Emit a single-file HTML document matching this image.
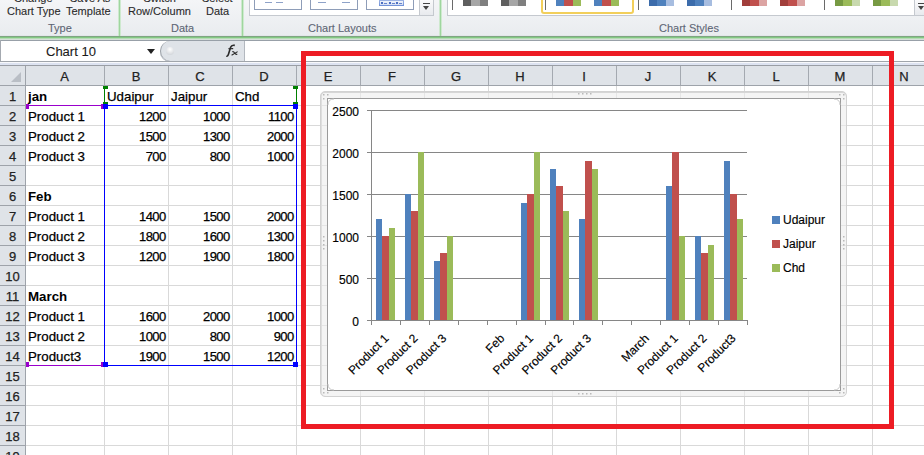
<!DOCTYPE html><html><head><meta charset="utf-8"><style>
*{margin:0;padding:0;box-sizing:border-box}
body{width:924px;height:455px;overflow:hidden;position:relative;background:#fff;font-family:"Liberation Sans",sans-serif;}
.a{position:absolute}
.t{position:absolute;white-space:nowrap;line-height:1;-webkit-text-stroke:0.25px currentColor}
</style></head><body>

<div class="a" style="left:0;top:0;width:924px;height:36px;background:linear-gradient(#f4f5f7,#e9ecef)"></div>
<div class="a" style="left:0;top:35px;width:924px;height:1px;background:#e3e6ea"></div>
<div class="a" style="left:0;top:36px;width:924px;height:1px;background:#7fa582"></div>
<div class="a" style="left:0;top:37px;width:924px;height:1px;background:#82c882"></div>
<div class="a" style="left:0;top:38px;width:924px;height:1px;background:#b5dbb5"></div>
<div class="a" style="left:0;top:39px;width:924px;height:1px;background:#d5dfd8"></div>
<div class="a" style="left:0;top:40px;width:924px;height:1px;background:#98a0a8"></div>
<div class="a" style="left:118px;top:0;width:3px;height:36px;background:linear-gradient(90deg,rgba(255,255,255,.8),#9fd69f 33%,#9fd69f 66%,rgba(255,255,255,.8))"></div>
<div class="a" style="left:241px;top:0;width:3px;height:36px;background:linear-gradient(90deg,rgba(255,255,255,.8),#9fd69f 33%,#9fd69f 66%,rgba(255,255,255,.8))"></div>
<div class="a" style="left:439px;top:0;width:3px;height:36px;background:linear-gradient(90deg,rgba(255,255,255,.8),#9fd69f 33%,#9fd69f 66%,rgba(255,255,255,.8))"></div>
<div class="t" style="left:14px;top:-7.5px;font-size:11px;color:#2b2b2b;-webkit-text-stroke:0.1px #2b2b2b;">Change</div>
<div class="t" style="left:70px;top:-7.5px;font-size:11px;color:#2b2b2b;-webkit-text-stroke:0.1px #2b2b2b;">Save As</div>
<div class="t" style="left:7px;top:5.5px;font-size:11px;color:#2b2b2b;-webkit-text-stroke:0.1px #2b2b2b;">Chart Type</div>
<div class="t" style="left:66px;top:5.5px;font-size:11px;color:#2b2b2b;-webkit-text-stroke:0.1px #2b2b2b;">Template</div>
<div class="t" style="left:143.5px;top:-7.5px;font-size:11px;color:#2b2b2b;-webkit-text-stroke:0.1px #2b2b2b;">Switch</div>
<div class="t" style="left:202px;top:-7.5px;font-size:11px;color:#2b2b2b;-webkit-text-stroke:0.1px #2b2b2b;">Select</div>
<div class="t" style="left:128px;top:5.5px;font-size:11px;color:#2b2b2b;-webkit-text-stroke:0.1px #2b2b2b;">Row/Column</div>
<div class="t" style="left:206px;top:5.5px;font-size:11px;color:#2b2b2b;-webkit-text-stroke:0.1px #2b2b2b;">Data</div>
<div class="t" style="left:48px;top:22.5px;font-size:11px;color:#5e6675;-webkit-text-stroke:0.1px #5e6675;">Type</div>
<div class="t" style="left:171px;top:22.5px;font-size:11px;color:#5e6675;-webkit-text-stroke:0.1px #5e6675;">Data</div>
<div class="t" style="left:308px;top:22.5px;font-size:11px;color:#5e6675;-webkit-text-stroke:0.1px #5e6675;">Chart Layouts</div>
<div class="t" style="left:659px;top:22.5px;font-size:11px;color:#5e6675;-webkit-text-stroke:0.1px #5e6675;">Chart Styles</div>
<div class="a" style="left:249px;top:-2px;width:185px;height:18px;border:1px solid #c5c9cf;background:#fff"></div>
<div class="a" style="left:419px;top:-2px;width:15px;height:18px;border:1px solid #c5c9cf;background:linear-gradient(#fbfbfc,#e8eaee)"></div>
<div class="a" style="left:423px;top:3px;width:7px;height:1px;background:#444"></div>
<div class="a" style="left:423px;top:6px;width:0;height:0;border-left:3.5px solid transparent;border-right:3.5px solid transparent;border-top:4px solid #444"></div>
<div class="a" style="left:254px;top:-3px;width:48px;height:13px;border:1px solid #8e9db8;background:#fff"></div>
<div class="a" style="left:310px;top:-3px;width:48px;height:13px;border:1px solid #8e9db8;background:#fff"></div>
<div class="a" style="left:366px;top:-3px;width:48px;height:13px;border:1px solid #8e9db8;background:#fff"></div>
<div class="a" style="left:265px;top:2px;width:7px;height:1px;background:#8ea2c8"></div>
<div class="a" style="left:276px;top:2px;width:7px;height:1px;background:#8ea2c8"></div>
<div class="a" style="left:318px;top:2px;width:8px;height:1px;background:#8ea2c8"></div>
<div class="a" style="left:342px;top:2px;width:8px;height:1px;background:#8ea2c8"></div>
<div class="a" style="left:379px;top:-1px;width:25px;height:7px;background:linear-gradient(#a8bce6,#6d8fd8)"></div>
<div class="a" style="left:380px;top:1px;width:23px;height:4px;background:linear-gradient(#f0f4fb,#d4def3)"></div>
<div class="a" style="left:381px;top:2px;width:2px;height:2px;background:#4d6fc2"></div>
<div class="a" style="left:384px;top:3px;width:3px;height:1px;background:#6683cc"></div>
<div class="a" style="left:389px;top:2px;width:2px;height:2px;background:#4d6fc2"></div>
<div class="a" style="left:392px;top:3px;width:3px;height:1px;background:#6683cc"></div>
<div class="a" style="left:396px;top:2px;width:2px;height:2px;background:#4d6fc2"></div>
<div class="a" style="left:399px;top:3px;width:3px;height:1px;background:#6683cc"></div>
<div class="a" style="left:447px;top:-2px;width:478px;height:18px;border:1px solid #c5c9cf;background:#fff"></div>
<div class="a" style="left:914px;top:-2px;width:15px;height:18px;border:1px solid #c5c9cf;background:linear-gradient(#fbfbfc,#e8eaee)"></div>
<div class="a" style="left:918px;top:3px;width:7px;height:1px;background:#444"></div>
<div class="a" style="left:918px;top:6px;width:0;height:0;border-left:3.5px solid transparent;border-right:3.5px solid transparent;border-top:4px solid #444"></div>
<div class="a" style="left:541px;top:-3px;width:93px;height:17px;border:2px solid #f2cf5b;border-radius:0 0 3px 3px;background:#fff"></div>
<div class="a" style="left:452px;top:0;width:1px;height:10px;background:#6a6a6a"></div>
<div class="a" style="left:545px;top:0;width:1px;height:10px;background:#6a6a6a"></div>
<div class="a" style="left:638px;top:0;width:1px;height:10px;background:#6a6a6a"></div>
<div class="a" style="left:731px;top:0;width:1px;height:10px;background:#6a6a6a"></div>
<div class="a" style="left:824px;top:0;width:1px;height:10px;background:#6a6a6a"></div>
<div class="a" style="left:463px;top:0;width:8px;height:6px;background:#5f5f5f"></div>
<div class="a" style="left:471px;top:0;width:9px;height:6px;background:#a6a6a6"></div>
<div class="a" style="left:480px;top:0;width:8px;height:6px;background:#7f7f7f"></div>
<div class="a" style="left:501px;top:0;width:8px;height:6px;background:#5f5f5f"></div>
<div class="a" style="left:509px;top:0;width:9px;height:6px;background:#a6a6a6"></div>
<div class="a" style="left:518px;top:0;width:8px;height:6px;background:#7f7f7f"></div>
<div class="a" style="left:556px;top:0;width:8px;height:6px;background:#4f81bd"></div>
<div class="a" style="left:564px;top:0;width:9px;height:6px;background:#c0504d"></div>
<div class="a" style="left:573px;top:0;width:8px;height:6px;background:#9bbb59"></div>
<div class="a" style="left:594px;top:0;width:8px;height:6px;background:#4f81bd"></div>
<div class="a" style="left:602px;top:0;width:9px;height:6px;background:#c0504d"></div>
<div class="a" style="left:611px;top:0;width:8px;height:6px;background:#9bbb59"></div>
<div class="a" style="left:649px;top:0;width:8px;height:6px;background:#3c6cab"></div>
<div class="a" style="left:657px;top:0;width:9px;height:6px;background:#4f81bd"></div>
<div class="a" style="left:666px;top:0;width:8px;height:6px;background:#a7bde0"></div>
<div class="a" style="left:687px;top:0;width:8px;height:6px;background:#3c6cab"></div>
<div class="a" style="left:695px;top:0;width:9px;height:6px;background:#4f81bd"></div>
<div class="a" style="left:704px;top:0;width:8px;height:6px;background:#a7bde0"></div>
<div class="a" style="left:742px;top:0;width:8px;height:6px;background:#a13e3b"></div>
<div class="a" style="left:750px;top:0;width:9px;height:6px;background:#c0504d"></div>
<div class="a" style="left:759px;top:0;width:8px;height:6px;background:#dca4a3"></div>
<div class="a" style="left:780px;top:0;width:8px;height:6px;background:#a13e3b"></div>
<div class="a" style="left:788px;top:0;width:9px;height:6px;background:#c0504d"></div>
<div class="a" style="left:797px;top:0;width:8px;height:6px;background:#dca4a3"></div>
<div class="a" style="left:835px;top:0;width:8px;height:6px;background:#779a43"></div>
<div class="a" style="left:843px;top:0;width:9px;height:6px;background:#9bbb59"></div>
<div class="a" style="left:852px;top:0;width:8px;height:6px;background:#c8d9ae"></div>
<div class="a" style="left:873px;top:0;width:8px;height:6px;background:#779a43"></div>
<div class="a" style="left:881px;top:0;width:9px;height:6px;background:#9bbb59"></div>
<div class="a" style="left:890px;top:0;width:8px;height:6px;background:#c8d9ae"></div>
<div class="a" style="left:0;top:41px;width:924px;height:20px;background:#fff"></div>
<div class="a" style="left:0;top:40px;width:1px;height:21px;background:#a4a9b0"></div>
<div class="t" style="left:46px;top:45px;font-size:13px;color:#1a1a1a;-webkit-text-stroke:0.1px #1a1a1a;">Chart 10</div>
<div class="a" style="left:147px;top:49px;width:0;height:0;border-left:4px solid transparent;border-right:4px solid transparent;border-top:5px solid #222"></div>
<div class="a" style="left:160px;top:41px;width:85px;height:21px;background:#dfe3e8;border:1px solid #b3b8bf;border-left:none;border-top:none;border-radius:10px 0 0 10px"></div>
<div class="a" style="left:160px;top:41px;width:20px;height:20px;border-left:1px solid #9ba0a7;border-radius:10px 0 0 10px"></div>
<div class="a" style="left:166px;top:47px;width:8px;height:8px;border-radius:50%;background:radial-gradient(circle at 50% 30%,#fff,#c8ccd2)"></div>
<svg class="a" style="left:0;top:0" width="924" height="62"><path d="M226.3 56.2 Q227.8 56.6 228.7 53.5 L230.6 47.3 Q231.6 44.6 234.8 45.4" fill="none" stroke="#2a2a2a" stroke-width="1.6"/><path d="M228.3 48.8 L233.2 48.6" stroke="#2a2a2a" stroke-width="1.1"/><path d="M232.3 51.8 Q233.6 51.2 234.6 53 Q235.6 54.8 237.3 54.3 M237.6 51.6 L231.6 55.2" fill="none" stroke="#2a2a2a" stroke-width="1.1"/></svg>
<div class="a" style="left:0;top:61px;width:924px;height:1px;background:#a0a5ab"></div>
<div class="a" style="left:0;top:62px;width:924px;height:1px;background:#f7f8fb"></div>
<div class="a" style="left:0;top:63px;width:924px;height:2px;background:#dde3f1"></div>
<div class="a" style="left:0;top:65px;width:924px;height:1px;background:#9a9ea5"></div>
<div class="a" style="left:0;top:66px;width:924px;height:19px;background:#dfe3e8"></div>
<div class="a" style="left:0;top:85px;width:924px;height:1px;background:#9ea3aa"></div>
<div class="a" style="left:0;top:86px;width:25px;height:369px;background:#dfe3e8"></div>
<div class="a" style="left:25px;top:66px;width:1px;height:389px;background:#9ea3aa"></div>
<div class="a" style="left:11px;top:72px;width:0;height:0;border-left:10px solid transparent;border-bottom:10px solid #b9bec5"></div>
<div class="a" style="left:104px;top:66px;width:1px;height:19px;background:#a4a9b0"></div>
<div class="t" style="left:25px;width:79px;text-align:center;top:70px;font-size:13px;color:#222">A</div>
<div class="a" style="left:168px;top:66px;width:1px;height:19px;background:#a4a9b0"></div>
<div class="t" style="left:104px;width:64px;text-align:center;top:70px;font-size:13px;color:#222">B</div>
<div class="a" style="left:232px;top:66px;width:1px;height:19px;background:#a4a9b0"></div>
<div class="t" style="left:168px;width:64px;text-align:center;top:70px;font-size:13px;color:#222">C</div>
<div class="a" style="left:296px;top:66px;width:1px;height:19px;background:#a4a9b0"></div>
<div class="t" style="left:232px;width:64px;text-align:center;top:70px;font-size:13px;color:#222">D</div>
<div class="a" style="left:360px;top:66px;width:1px;height:19px;background:#a4a9b0"></div>
<div class="t" style="left:296px;width:64px;text-align:center;top:70px;font-size:13px;color:#222">E</div>
<div class="a" style="left:424px;top:66px;width:1px;height:19px;background:#a4a9b0"></div>
<div class="t" style="left:360px;width:64px;text-align:center;top:70px;font-size:13px;color:#222">F</div>
<div class="a" style="left:488px;top:66px;width:1px;height:19px;background:#a4a9b0"></div>
<div class="t" style="left:424px;width:64px;text-align:center;top:70px;font-size:13px;color:#222">G</div>
<div class="a" style="left:552px;top:66px;width:1px;height:19px;background:#a4a9b0"></div>
<div class="t" style="left:488px;width:64px;text-align:center;top:70px;font-size:13px;color:#222">H</div>
<div class="a" style="left:616px;top:66px;width:1px;height:19px;background:#a4a9b0"></div>
<div class="t" style="left:552px;width:64px;text-align:center;top:70px;font-size:13px;color:#222">I</div>
<div class="a" style="left:680px;top:66px;width:1px;height:19px;background:#a4a9b0"></div>
<div class="t" style="left:616px;width:64px;text-align:center;top:70px;font-size:13px;color:#222">J</div>
<div class="a" style="left:744px;top:66px;width:1px;height:19px;background:#a4a9b0"></div>
<div class="t" style="left:680px;width:64px;text-align:center;top:70px;font-size:13px;color:#222">K</div>
<div class="a" style="left:808px;top:66px;width:1px;height:19px;background:#a4a9b0"></div>
<div class="t" style="left:744px;width:64px;text-align:center;top:70px;font-size:13px;color:#222">L</div>
<div class="a" style="left:872px;top:66px;width:1px;height:19px;background:#a4a9b0"></div>
<div class="t" style="left:808px;width:64px;text-align:center;top:70px;font-size:13px;color:#222">M</div>
<div class="a" style="left:936px;top:66px;width:1px;height:19px;background:#a4a9b0"></div>
<div class="t" style="left:872px;width:64px;text-align:center;top:70px;font-size:13px;color:#222">N</div>
<div class="a" style="left:104px;top:86px;width:1px;height:369px;background:#d9d9d9"></div>
<div class="a" style="left:168px;top:86px;width:1px;height:369px;background:#d9d9d9"></div>
<div class="a" style="left:232px;top:86px;width:1px;height:369px;background:#d9d9d9"></div>
<div class="a" style="left:296px;top:86px;width:1px;height:369px;background:#d9d9d9"></div>
<div class="a" style="left:360px;top:86px;width:1px;height:369px;background:#d9d9d9"></div>
<div class="a" style="left:424px;top:86px;width:1px;height:369px;background:#d9d9d9"></div>
<div class="a" style="left:488px;top:86px;width:1px;height:369px;background:#d9d9d9"></div>
<div class="a" style="left:552px;top:86px;width:1px;height:369px;background:#d9d9d9"></div>
<div class="a" style="left:616px;top:86px;width:1px;height:369px;background:#d9d9d9"></div>
<div class="a" style="left:680px;top:86px;width:1px;height:369px;background:#d9d9d9"></div>
<div class="a" style="left:744px;top:86px;width:1px;height:369px;background:#d9d9d9"></div>
<div class="a" style="left:808px;top:86px;width:1px;height:369px;background:#d9d9d9"></div>
<div class="a" style="left:872px;top:86px;width:1px;height:369px;background:#d9d9d9"></div>
<div class="a" style="left:26px;top:105px;width:898px;height:1px;background:#d9d9d9"></div>
<div class="a" style="left:0;top:105px;width:25px;height:1px;background:#9ea3aa"></div>
<div class="t" style="left:0;width:25px;text-align:center;top:90px;font-size:13px;color:#222">1</div>
<div class="a" style="left:26px;top:125px;width:898px;height:1px;background:#d9d9d9"></div>
<div class="a" style="left:0;top:125px;width:25px;height:1px;background:#9ea3aa"></div>
<div class="t" style="left:0;width:25px;text-align:center;top:110px;font-size:13px;color:#222">2</div>
<div class="a" style="left:26px;top:145px;width:898px;height:1px;background:#d9d9d9"></div>
<div class="a" style="left:0;top:145px;width:25px;height:1px;background:#9ea3aa"></div>
<div class="t" style="left:0;width:25px;text-align:center;top:130px;font-size:13px;color:#222">3</div>
<div class="a" style="left:26px;top:165px;width:898px;height:1px;background:#d9d9d9"></div>
<div class="a" style="left:0;top:165px;width:25px;height:1px;background:#9ea3aa"></div>
<div class="t" style="left:0;width:25px;text-align:center;top:150px;font-size:13px;color:#222">4</div>
<div class="a" style="left:26px;top:185px;width:898px;height:1px;background:#d9d9d9"></div>
<div class="a" style="left:0;top:185px;width:25px;height:1px;background:#9ea3aa"></div>
<div class="t" style="left:0;width:25px;text-align:center;top:170px;font-size:13px;color:#222">5</div>
<div class="a" style="left:26px;top:205px;width:898px;height:1px;background:#d9d9d9"></div>
<div class="a" style="left:0;top:205px;width:25px;height:1px;background:#9ea3aa"></div>
<div class="t" style="left:0;width:25px;text-align:center;top:190px;font-size:13px;color:#222">6</div>
<div class="a" style="left:26px;top:225px;width:898px;height:1px;background:#d9d9d9"></div>
<div class="a" style="left:0;top:225px;width:25px;height:1px;background:#9ea3aa"></div>
<div class="t" style="left:0;width:25px;text-align:center;top:210px;font-size:13px;color:#222">7</div>
<div class="a" style="left:26px;top:245px;width:898px;height:1px;background:#d9d9d9"></div>
<div class="a" style="left:0;top:245px;width:25px;height:1px;background:#9ea3aa"></div>
<div class="t" style="left:0;width:25px;text-align:center;top:230px;font-size:13px;color:#222">8</div>
<div class="a" style="left:26px;top:265px;width:898px;height:1px;background:#d9d9d9"></div>
<div class="a" style="left:0;top:265px;width:25px;height:1px;background:#9ea3aa"></div>
<div class="t" style="left:0;width:25px;text-align:center;top:250px;font-size:13px;color:#222">9</div>
<div class="a" style="left:26px;top:285px;width:898px;height:1px;background:#d9d9d9"></div>
<div class="a" style="left:0;top:285px;width:25px;height:1px;background:#9ea3aa"></div>
<div class="t" style="left:0;width:25px;text-align:center;top:270px;font-size:13px;color:#222">10</div>
<div class="a" style="left:26px;top:305px;width:898px;height:1px;background:#d9d9d9"></div>
<div class="a" style="left:0;top:305px;width:25px;height:1px;background:#9ea3aa"></div>
<div class="t" style="left:0;width:25px;text-align:center;top:290px;font-size:13px;color:#222">11</div>
<div class="a" style="left:26px;top:325px;width:898px;height:1px;background:#d9d9d9"></div>
<div class="a" style="left:0;top:325px;width:25px;height:1px;background:#9ea3aa"></div>
<div class="t" style="left:0;width:25px;text-align:center;top:310px;font-size:13px;color:#222">12</div>
<div class="a" style="left:26px;top:345px;width:898px;height:1px;background:#d9d9d9"></div>
<div class="a" style="left:0;top:345px;width:25px;height:1px;background:#9ea3aa"></div>
<div class="t" style="left:0;width:25px;text-align:center;top:330px;font-size:13px;color:#222">13</div>
<div class="a" style="left:26px;top:365px;width:898px;height:1px;background:#d9d9d9"></div>
<div class="a" style="left:0;top:365px;width:25px;height:1px;background:#9ea3aa"></div>
<div class="t" style="left:0;width:25px;text-align:center;top:350px;font-size:13px;color:#222">14</div>
<div class="a" style="left:26px;top:385px;width:898px;height:1px;background:#d9d9d9"></div>
<div class="a" style="left:0;top:385px;width:25px;height:1px;background:#9ea3aa"></div>
<div class="t" style="left:0;width:25px;text-align:center;top:370px;font-size:13px;color:#222">15</div>
<div class="a" style="left:26px;top:405px;width:898px;height:1px;background:#d9d9d9"></div>
<div class="a" style="left:0;top:405px;width:25px;height:1px;background:#9ea3aa"></div>
<div class="t" style="left:0;width:25px;text-align:center;top:390px;font-size:13px;color:#222">16</div>
<div class="a" style="left:26px;top:425px;width:898px;height:1px;background:#d9d9d9"></div>
<div class="a" style="left:0;top:425px;width:25px;height:1px;background:#9ea3aa"></div>
<div class="t" style="left:0;width:25px;text-align:center;top:410px;font-size:13px;color:#222">17</div>
<div class="a" style="left:26px;top:445px;width:898px;height:1px;background:#d9d9d9"></div>
<div class="a" style="left:0;top:445px;width:25px;height:1px;background:#9ea3aa"></div>
<div class="t" style="left:0;width:25px;text-align:center;top:430px;font-size:13px;color:#222">18</div>
<div class="a" style="left:26px;top:465px;width:898px;height:1px;background:#d9d9d9"></div>
<div class="a" style="left:0;top:465px;width:25px;height:1px;background:#9ea3aa"></div>
<div class="t" style="left:0;width:25px;text-align:center;top:450px;font-size:13px;color:#222">19</div>
<div class="t" style="left:28px;top:90px;font-size:13.3px;color:#000;font-weight:bold;-webkit-text-stroke:0;">jan</div>
<div class="t" style="left:107px;top:90px;font-size:13.3px;color:#000">Udaipur</div>
<div class="t" style="left:171px;top:90px;font-size:13.3px;color:#000">Jaipur</div>
<div class="t" style="left:235px;top:90px;font-size:13.3px;color:#000">Chd</div>
<div class="t" style="left:28px;top:110px;font-size:13.3px;color:#000;">Product 1</div>
<div class="t" style="left:108px;width:57.6px;text-align:right;top:110px;font-size:13px;letter-spacing:-0.6px;color:#000">1200</div>
<div class="t" style="left:172px;width:57.6px;text-align:right;top:110px;font-size:13px;letter-spacing:-0.6px;color:#000">1000</div>
<div class="t" style="left:236px;width:57.6px;text-align:right;top:110px;font-size:13px;letter-spacing:-0.6px;color:#000">1100</div>
<div class="t" style="left:28px;top:130px;font-size:13.3px;color:#000;">Product 2</div>
<div class="t" style="left:108px;width:57.6px;text-align:right;top:130px;font-size:13px;letter-spacing:-0.6px;color:#000">1500</div>
<div class="t" style="left:172px;width:57.6px;text-align:right;top:130px;font-size:13px;letter-spacing:-0.6px;color:#000">1300</div>
<div class="t" style="left:236px;width:57.6px;text-align:right;top:130px;font-size:13px;letter-spacing:-0.6px;color:#000">2000</div>
<div class="t" style="left:28px;top:150px;font-size:13.3px;color:#000;">Product 3</div>
<div class="t" style="left:108px;width:57.6px;text-align:right;top:150px;font-size:13px;letter-spacing:-0.6px;color:#000">700</div>
<div class="t" style="left:172px;width:57.6px;text-align:right;top:150px;font-size:13px;letter-spacing:-0.6px;color:#000">800</div>
<div class="t" style="left:236px;width:57.6px;text-align:right;top:150px;font-size:13px;letter-spacing:-0.6px;color:#000">1000</div>
<div class="t" style="left:28px;top:190px;font-size:13.3px;color:#000;font-weight:bold;-webkit-text-stroke:0;">Feb</div>
<div class="t" style="left:28px;top:210px;font-size:13.3px;color:#000;">Product 1</div>
<div class="t" style="left:108px;width:57.6px;text-align:right;top:210px;font-size:13px;letter-spacing:-0.6px;color:#000">1400</div>
<div class="t" style="left:172px;width:57.6px;text-align:right;top:210px;font-size:13px;letter-spacing:-0.6px;color:#000">1500</div>
<div class="t" style="left:236px;width:57.6px;text-align:right;top:210px;font-size:13px;letter-spacing:-0.6px;color:#000">2000</div>
<div class="t" style="left:28px;top:230px;font-size:13.3px;color:#000;">Product 2</div>
<div class="t" style="left:108px;width:57.6px;text-align:right;top:230px;font-size:13px;letter-spacing:-0.6px;color:#000">1800</div>
<div class="t" style="left:172px;width:57.6px;text-align:right;top:230px;font-size:13px;letter-spacing:-0.6px;color:#000">1600</div>
<div class="t" style="left:236px;width:57.6px;text-align:right;top:230px;font-size:13px;letter-spacing:-0.6px;color:#000">1300</div>
<div class="t" style="left:28px;top:250px;font-size:13.3px;color:#000;">Product 3</div>
<div class="t" style="left:108px;width:57.6px;text-align:right;top:250px;font-size:13px;letter-spacing:-0.6px;color:#000">1200</div>
<div class="t" style="left:172px;width:57.6px;text-align:right;top:250px;font-size:13px;letter-spacing:-0.6px;color:#000">1900</div>
<div class="t" style="left:236px;width:57.6px;text-align:right;top:250px;font-size:13px;letter-spacing:-0.6px;color:#000">1800</div>
<div class="t" style="left:28px;top:290px;font-size:13.3px;color:#000;font-weight:bold;-webkit-text-stroke:0;">March</div>
<div class="t" style="left:28px;top:310px;font-size:13.3px;color:#000;">Product 1</div>
<div class="t" style="left:108px;width:57.6px;text-align:right;top:310px;font-size:13px;letter-spacing:-0.6px;color:#000">1600</div>
<div class="t" style="left:172px;width:57.6px;text-align:right;top:310px;font-size:13px;letter-spacing:-0.6px;color:#000">2000</div>
<div class="t" style="left:236px;width:57.6px;text-align:right;top:310px;font-size:13px;letter-spacing:-0.6px;color:#000">1000</div>
<div class="t" style="left:28px;top:330px;font-size:13.3px;color:#000;">Product 2</div>
<div class="t" style="left:108px;width:57.6px;text-align:right;top:330px;font-size:13px;letter-spacing:-0.6px;color:#000">1000</div>
<div class="t" style="left:172px;width:57.6px;text-align:right;top:330px;font-size:13px;letter-spacing:-0.6px;color:#000">800</div>
<div class="t" style="left:236px;width:57.6px;text-align:right;top:330px;font-size:13px;letter-spacing:-0.6px;color:#000">900</div>
<div class="t" style="left:28px;top:350px;font-size:13.3px;color:#000;">Product3</div>
<div class="t" style="left:108px;width:57.6px;text-align:right;top:350px;font-size:13px;letter-spacing:-0.6px;color:#000">1900</div>
<div class="t" style="left:172px;width:57.6px;text-align:right;top:350px;font-size:13px;letter-spacing:-0.6px;color:#000">1500</div>
<div class="t" style="left:236px;width:57.6px;text-align:right;top:350px;font-size:13px;letter-spacing:-0.6px;color:#000">1200</div>
<div class="a" style="left:26px;top:105px;width:78px;height:1px;background:#9900cc"></div>
<div class="a" style="left:26px;top:365px;width:78px;height:1px;background:#9900cc"></div>
<div class="a" style="left:104px;top:86px;width:1px;height:19px;background:#008000"></div>
<div class="a" style="left:296px;top:86px;width:1px;height:19px;background:#008000"></div>
<div class="a" style="left:104px;top:105px;width:193px;height:1px;background:#0000ff"></div>
<div class="a" style="left:104px;top:365px;width:193px;height:1px;background:#0000ff"></div>
<div class="a" style="left:104px;top:105px;width:1px;height:261px;background:#0000ff"></div>
<div class="a" style="left:296px;top:105px;width:1px;height:261px;background:#0000ff"></div>
<div class="a" style="left:103px;top:86px;width:5px;height:3px;background:#008000"></div>
<div class="a" style="left:103px;top:102px;width:5px;height:3px;background:#008000"></div>
<div class="a" style="left:293px;top:86px;width:5px;height:3px;background:#008000"></div>
<div class="a" style="left:293px;top:102px;width:5px;height:3px;background:#008000"></div>
<div class="a" style="left:103px;top:104px;width:5px;height:5px;background:#0000ff"></div>
<div class="a" style="left:293px;top:104px;width:5px;height:5px;background:#0000ff"></div>
<div class="a" style="left:103px;top:362px;width:5px;height:5px;background:#0000ff"></div>
<div class="a" style="left:293px;top:362px;width:5px;height:5px;background:#0000ff"></div>
<div class="a" style="left:101px;top:104px;width:2px;height:5px;background:#9900cc"></div>
<div class="a" style="left:26px;top:104px;width:3px;height:5px;background:#9900cc"></div>
<div class="a" style="left:101px;top:362px;width:2px;height:5px;background:#9900cc"></div>
<div class="a" style="left:26px;top:362px;width:3px;height:5px;background:#9900cc"></div>
<div class="a" style="left:320px;top:91px;width:527px;height:306px;border:1px solid #d2d2d2;border-radius:5px;background:rgba(236,236,236,.6);box-shadow:inset 0 1px 0 #d6d6d6,inset 1px 0 0 #dedede"></div>
<div class="a" style="left:327px;top:98px;width:514px;height:293px;border:1px solid #9a9a9a;background:#fff"></div>
<svg class="a" style="left:0;top:0" width="924" height="455">
<path d="M328 105 Q328 99 334 99" fill="none" stroke="#c8c8c8" stroke-width="1"/>
<path d="M840 105 Q840 99 834 99" fill="none" stroke="#c8c8c8" stroke-width="1"/>
<path d="M328 384 Q328 390 334 390" fill="none" stroke="#c8c8c8" stroke-width="1"/>
<path d="M840 384 Q840 390 834 390" fill="none" stroke="#c8c8c8" stroke-width="1"/>
<rect x="323" y="94" width="1.5" height="1.5" fill="#a0a0a0" opacity="0.7"/>
<rect x="327" y="94" width="1.5" height="1.5" fill="#a0a0a0" opacity="0.7"/>
<rect x="323" y="98" width="1.5" height="1.5" fill="#a0a0a0" opacity="0.7"/>
<rect x="843" y="94" width="1.5" height="1.5" fill="#a0a0a0" opacity="0.7"/>
<rect x="839" y="94" width="1.5" height="1.5" fill="#a0a0a0" opacity="0.7"/>
<rect x="843" y="98" width="1.5" height="1.5" fill="#a0a0a0" opacity="0.7"/>
<rect x="323" y="392" width="1.5" height="1.5" fill="#a0a0a0" opacity="0.7"/>
<rect x="327" y="392" width="1.5" height="1.5" fill="#a0a0a0" opacity="0.7"/>
<rect x="323" y="388" width="1.5" height="1.5" fill="#a0a0a0" opacity="0.7"/>
<rect x="843" y="392" width="1.5" height="1.5" fill="#a0a0a0" opacity="0.7"/>
<rect x="839" y="392" width="1.5" height="1.5" fill="#a0a0a0" opacity="0.7"/>
<rect x="843" y="388" width="1.5" height="1.5" fill="#a0a0a0" opacity="0.7"/>
<rect x="578" y="93" width="1.5" height="1.5" fill="#a0a0a0" opacity="0.7"/>
<rect x="578" y="393" width="1.5" height="1.5" fill="#a0a0a0" opacity="0.7"/>
<rect x="323" y="236" width="1.5" height="1.5" fill="#a0a0a0" opacity="0.7"/>
<rect x="843" y="236" width="1.5" height="1.5" fill="#a0a0a0" opacity="0.7"/>
<rect x="582" y="93" width="1.5" height="1.5" fill="#a0a0a0" opacity="0.7"/>
<rect x="582" y="393" width="1.5" height="1.5" fill="#a0a0a0" opacity="0.7"/>
<rect x="323" y="240" width="1.5" height="1.5" fill="#a0a0a0" opacity="0.7"/>
<rect x="843" y="240" width="1.5" height="1.5" fill="#a0a0a0" opacity="0.7"/>
<rect x="586" y="93" width="1.5" height="1.5" fill="#a0a0a0" opacity="0.7"/>
<rect x="586" y="393" width="1.5" height="1.5" fill="#a0a0a0" opacity="0.7"/>
<rect x="323" y="244" width="1.5" height="1.5" fill="#a0a0a0" opacity="0.7"/>
<rect x="843" y="244" width="1.5" height="1.5" fill="#a0a0a0" opacity="0.7"/>
<rect x="590" y="93" width="1.5" height="1.5" fill="#a0a0a0" opacity="0.7"/>
<rect x="590" y="393" width="1.5" height="1.5" fill="#a0a0a0" opacity="0.7"/>
<rect x="323" y="248" width="1.5" height="1.5" fill="#a0a0a0" opacity="0.7"/>
<rect x="843" y="248" width="1.5" height="1.5" fill="#a0a0a0" opacity="0.7"/>
</svg>
<svg class="a" style="left:0;top:0" width="924" height="455" font-family="Liberation Sans, sans-serif" stroke-width="0.15">
<line x1="367" y1="320.5" x2="747" y2="320.5" stroke="#868686" stroke-width="1"/>
<text x="359" y="325.5" font-size="12" text-anchor="end" fill="#000" stroke="#000">0</text>
<line x1="367" y1="278.5" x2="747" y2="278.5" stroke="#868686" stroke-width="1"/>
<text x="359" y="283.5" font-size="12" text-anchor="end" fill="#000" stroke="#000">500</text>
<line x1="367" y1="236.5" x2="747" y2="236.5" stroke="#868686" stroke-width="1"/>
<text x="359" y="241.5" font-size="12" text-anchor="end" fill="#000" stroke="#000">1000</text>
<line x1="367" y1="194.5" x2="747" y2="194.5" stroke="#868686" stroke-width="1"/>
<text x="359" y="199.5" font-size="12" text-anchor="end" fill="#000" stroke="#000">1500</text>
<line x1="367" y1="152.5" x2="747" y2="152.5" stroke="#868686" stroke-width="1"/>
<text x="359" y="157.5" font-size="12" text-anchor="end" fill="#000" stroke="#000">2000</text>
<line x1="367" y1="110.5" x2="747" y2="110.5" stroke="#868686" stroke-width="1"/>
<text x="359" y="115.5" font-size="12" text-anchor="end" fill="#000" stroke="#000">2500</text>
<line x1="371.5" y1="110.5" x2="371.5" y2="320" stroke="#868686" stroke-width="1"/>
<line x1="371.5" y1="320" x2="371.5" y2="325" stroke="#868686" stroke-width="1"/>
<line x1="400.5" y1="320" x2="400.5" y2="325" stroke="#868686" stroke-width="1"/>
<line x1="429.5" y1="320" x2="429.5" y2="325" stroke="#868686" stroke-width="1"/>
<line x1="458.5" y1="320" x2="458.5" y2="325" stroke="#868686" stroke-width="1"/>
<line x1="487.5" y1="320" x2="487.5" y2="325" stroke="#868686" stroke-width="1"/>
<line x1="516.5" y1="320" x2="516.5" y2="325" stroke="#868686" stroke-width="1"/>
<line x1="545.5" y1="320" x2="545.5" y2="325" stroke="#868686" stroke-width="1"/>
<line x1="573.5" y1="320" x2="573.5" y2="325" stroke="#868686" stroke-width="1"/>
<line x1="602.5" y1="320" x2="602.5" y2="325" stroke="#868686" stroke-width="1"/>
<line x1="631.5" y1="320" x2="631.5" y2="325" stroke="#868686" stroke-width="1"/>
<line x1="660.5" y1="320" x2="660.5" y2="325" stroke="#868686" stroke-width="1"/>
<line x1="689.5" y1="320" x2="689.5" y2="325" stroke="#868686" stroke-width="1"/>
<line x1="718.5" y1="320" x2="718.5" y2="325" stroke="#868686" stroke-width="1"/>
<line x1="747.5" y1="320" x2="747.5" y2="325" stroke="#868686" stroke-width="1"/>
<rect x="376" y="219" width="6" height="101" fill="#4f81bd"/>
<rect x="382" y="236" width="7" height="84" fill="#c0504d"/>
<rect x="389" y="228" width="6" height="92" fill="#9bbb59"/>
<rect x="405" y="194" width="6" height="126" fill="#4f81bd"/>
<rect x="411" y="211" width="7" height="109" fill="#c0504d"/>
<rect x="418" y="152" width="6" height="168" fill="#9bbb59"/>
<rect x="434" y="261" width="6" height="59" fill="#4f81bd"/>
<rect x="440" y="253" width="7" height="67" fill="#c0504d"/>
<rect x="447" y="236" width="6" height="84" fill="#9bbb59"/>
<rect x="521" y="203" width="6" height="117" fill="#4f81bd"/>
<rect x="527" y="194" width="7" height="126" fill="#c0504d"/>
<rect x="534" y="152" width="6" height="168" fill="#9bbb59"/>
<rect x="550" y="169" width="6" height="151" fill="#4f81bd"/>
<rect x="556" y="186" width="7" height="134" fill="#c0504d"/>
<rect x="563" y="211" width="6" height="109" fill="#9bbb59"/>
<rect x="579" y="219" width="6" height="101" fill="#4f81bd"/>
<rect x="585" y="161" width="7" height="159" fill="#c0504d"/>
<rect x="592" y="169" width="6" height="151" fill="#9bbb59"/>
<rect x="666" y="186" width="6" height="134" fill="#4f81bd"/>
<rect x="672" y="152" width="7" height="168" fill="#c0504d"/>
<rect x="679" y="236" width="6" height="84" fill="#9bbb59"/>
<rect x="695" y="236" width="6" height="84" fill="#4f81bd"/>
<rect x="701" y="253" width="7" height="67" fill="#c0504d"/>
<rect x="708" y="245" width="6" height="75" fill="#9bbb59"/>
<rect x="724" y="161" width="6" height="159" fill="#4f81bd"/>
<rect x="730" y="194" width="7" height="126" fill="#c0504d"/>
<rect x="737" y="219" width="6" height="101" fill="#9bbb59"/>
<text x="389.5" y="339" font-size="12" text-anchor="end" transform="rotate(-45 389.5 339)" fill="#000" stroke="#000">Product 1</text>
<text x="418.4" y="339" font-size="12" text-anchor="end" transform="rotate(-45 418.4 339)" fill="#000" stroke="#000">Product 2</text>
<text x="447.3" y="339" font-size="12" text-anchor="end" transform="rotate(-45 447.3 339)" fill="#000" stroke="#000">Product 3</text>
<text x="505.2" y="339" font-size="12" text-anchor="end" transform="rotate(-45 505.2 339)" fill="#000" stroke="#000">Feb</text>
<text x="534.1" y="339" font-size="12" text-anchor="end" transform="rotate(-45 534.1 339)" fill="#000" stroke="#000">Product 1</text>
<text x="563.0" y="339" font-size="12" text-anchor="end" transform="rotate(-45 563.0 339)" fill="#000" stroke="#000">Product 2</text>
<text x="591.9" y="339" font-size="12" text-anchor="end" transform="rotate(-45 591.9 339)" fill="#000" stroke="#000">Product 3</text>
<text x="649.8" y="339" font-size="12" text-anchor="end" transform="rotate(-45 649.8 339)" fill="#000" stroke="#000">March</text>
<text x="678.7" y="339" font-size="12" text-anchor="end" transform="rotate(-45 678.7 339)" fill="#000" stroke="#000">Product 1</text>
<text x="707.6" y="339" font-size="12" text-anchor="end" transform="rotate(-45 707.6 339)" fill="#000" stroke="#000">Product 2</text>
<text x="736.5" y="339" font-size="12" text-anchor="end" transform="rotate(-45 736.5 339)" fill="#000" stroke="#000">Product3</text>
<rect x="772" y="216" width="8" height="8" fill="#4f81bd"/>
<text x="783" y="224" font-size="12" fill="#000" stroke="#000">Udaipur</text>
<rect x="772" y="240" width="8" height="8" fill="#c0504d"/>
<text x="783" y="248" font-size="12" fill="#000" stroke="#000">Jaipur</text>
<rect x="772" y="264" width="8" height="8" fill="#9bbb59"/>
<text x="783" y="272" font-size="12" fill="#000" stroke="#000">Chd</text>
</svg>
<div class="a" style="left:301px;top:51px;width:593px;height:378px;border:5px solid #ed1c24"></div>
</body></html>
